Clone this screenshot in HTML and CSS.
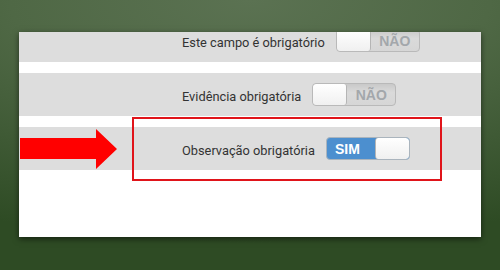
FILE: index.html
```html
<!DOCTYPE html>
<html lang="pt">
<head>
<meta charset="utf-8">
<link rel="stylesheet" href="styles.css">
</head>
<body>
<div class="card">
  <div class="list">
    <div class="row">
      <span class="label">Este campo é obrigatório</span>
      <span class="toggle off"><span class="knob"></span><span class="txt">NÃO</span></span>
    </div>
    <div class="row">
      <span class="label">Evidência obrigatória</span>
      <span class="toggle off"><span class="knob"></span><span class="txt">NÃO</span></span>
    </div>
    <div class="row">
      <span class="label">Observação obrigatória</span>
      <span class="toggle on"><span class="txt">SIM</span><span class="knob"></span></span>
    </div>
  </div>
</div>
<div class="highlight"></div>
<svg class="arrow" width="97" height="40" viewBox="0 0 97 40"><polygon points="0,9 76,9 76,0 97,20 76,40 76,30 0,30" fill="#ff0000"/></svg>
</body>
</html>
```
FILE: styles.css
```css
html, body { margin: 0; padding: 0; }
body {
  width: 500px;
  height: 270px;
  box-sizing: border-box;
  padding: 32px 19px 33px 19px;
  background: radial-gradient(ellipse 120% 90% at 50% 0%, #5b7252 0%, #4f6845 40%, #2e4b24 100%);
  position: relative;
  overflow: hidden;
  font-family: Roboto, "Liberation Sans", sans-serif;
}
.card {
  background: #ffffff;
  height: 205px;
  overflow: hidden;
  box-shadow: 0 2px 6px rgba(0,0,0,0.55);
}
.list {
  margin-top: -13px;
  display: flex;
  flex-direction: column;
  gap: 11px;
}
.row {
  height: 43px;
  background: #dddddd;
  display: flex;
  align-items: center;
  padding-left: 163px;
}
.label {
  font-size: 12.8px;
  color: #333333;
  padding-top: 3px;
}
.toggle {
  margin-left: 11px;
  width: 84px;
  height: 23px;
  box-sizing: border-box;
  border: 1px solid #b9b9b9;
  border-radius: 4px;
  display: flex;
  overflow: hidden;
  font-family: "Liberation Sans", Arial, sans-serif;
  font-weight: bold;
  font-size: 14px;
}
.toggle .knob {
  width: 33px;
  flex: none;
  background: linear-gradient(#ffffff, #f0f0f0);
}
.toggle .txt {
  flex: 1;
  display: flex;
  align-items: center;
  justify-content: center;
}
.toggle.off { background: linear-gradient(#c9c9c9, #dadada 40%, #d6d6d6); }
.toggle.off .knob { border-right: 1px solid #b5b5b5; border-radius: 3px; }
.toggle.off .txt { color: #a3a7ab; }
.toggle.on { background: #4c8fcf; border-color: #aab4bd; }
.toggle.on .txt { color: #ffffff; padding-right: 7px; }
.toggle.on .knob { border-left: 1px solid #b5b5b5; border-radius: 3px; }
.highlight {
  position: absolute;
  left: 132px;
  top: 117px;
  width: 310px;
  height: 64px;
  box-sizing: border-box;
  border: 2px solid #e0141a;
}
.arrow {
  position: absolute;
  left: 20px;
  top: 129px;
}
```
